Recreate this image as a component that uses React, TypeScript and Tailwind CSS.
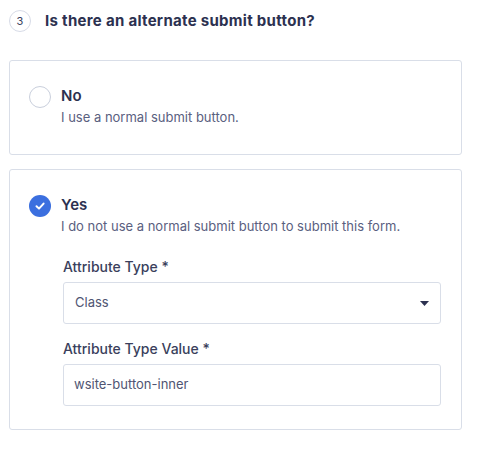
const font = { fontFamily: "Inter, 'Noto Sans', sans-serif" };

function RadioOff() {
  return (
    <span className="block h-[22px] w-[22px] shrink-0 rounded-full border border-[#c9cfdc] bg-white" />
  );
}

function RadioOn() {
  return (
    <span className="flex h-[22px] w-[22px] shrink-0 items-center justify-center rounded-full bg-[#3b6fdf]">
      <svg width="12" height="12" viewBox="0 0 12 12" fill="none">
        <path
          d="M2.5 6.2 5 8.6 9.6 3.6"
          stroke="white"
          strokeWidth="2"
          strokeLinecap="round"
          strokeLinejoin="round"
        />
      </svg>
    </span>
  );
}

export default function App() {
  return (
    <div className="min-h-[453px] w-[481px] bg-white text-[#2c3150]" style={font}>
      <div className="flex items-center gap-[14px] pl-[9px] pt-[10px]">
        <span className="flex h-[22px] w-[22px] items-center justify-center rounded-full border border-[#d7dbe7] text-[11px] text-[#3a3f5c]">
          3
        </span>
        <h2 className="text-[15px] font-bold leading-[22px] tracking-[0.3px]">
          Is there an alternate submit button?
        </h2>
      </div>

      <div className="ml-[9px] mt-[28px] flex w-[453px] flex-col gap-[14px]">
        <div className="flex h-[95px] items-start gap-[10px] rounded-[3px] border border-[#d9dee8] px-[19px] pt-[24px]">
          <span className="mt-[1px]">
            <RadioOff />
          </span>
          <div>
            <p className="text-[15px] font-semibold leading-[22px]">No</p>
            <p className="text-[13px] leading-[20px] text-[#5a6080]">
              I use a normal submit button.
            </p>
          </div>
        </div>

        <div className="flex h-[261px] items-start gap-[10px] rounded-[3px] border border-[#d9dee8] px-[19px] pt-[24px]">
          <span className="mt-[1px]">
            <RadioOn />
          </span>
          <div className="flex-1">
            <p className="text-[15px] font-semibold leading-[22px]">Yes</p>
            <p className="text-[13px] leading-[20px] text-[#5a6080]">
              I do not use a normal submit button to submit this form.
            </p>
            <div className="ml-[2px] mt-[21px] w-[378px]">
              <label className="block text-[14px] font-medium leading-[20px] text-[#3a3f5c]">
                Attribute Type *
              </label>
              <div className="mt-[5px] flex h-[42px] items-center justify-between rounded-[3px] border border-[#d9dee8] pl-[11px] pr-[11px]">
                <span className="text-[13px] text-[#4f5573]">Class</span>
                <svg width="9" height="5" viewBox="0 0 9 5">
                  <path d="M0 0h9L4.5 5z" fill="#2c3150" />
                </svg>
              </div>
              <label className="mt-[15px] block text-[14px] font-medium leading-[20px] text-[#3a3f5c]">
                Attribute Type Value *
              </label>
              <div className="mt-[5px] flex h-[42px] items-center rounded-[3px] border border-[#d9dee8] pl-[10px]">
                <span className="text-[13px] text-[#4f5573]">wsite-button-inner</span>
              </div>
            </div>
          </div>
        </div>
      </div>
    </div>
  );
}
